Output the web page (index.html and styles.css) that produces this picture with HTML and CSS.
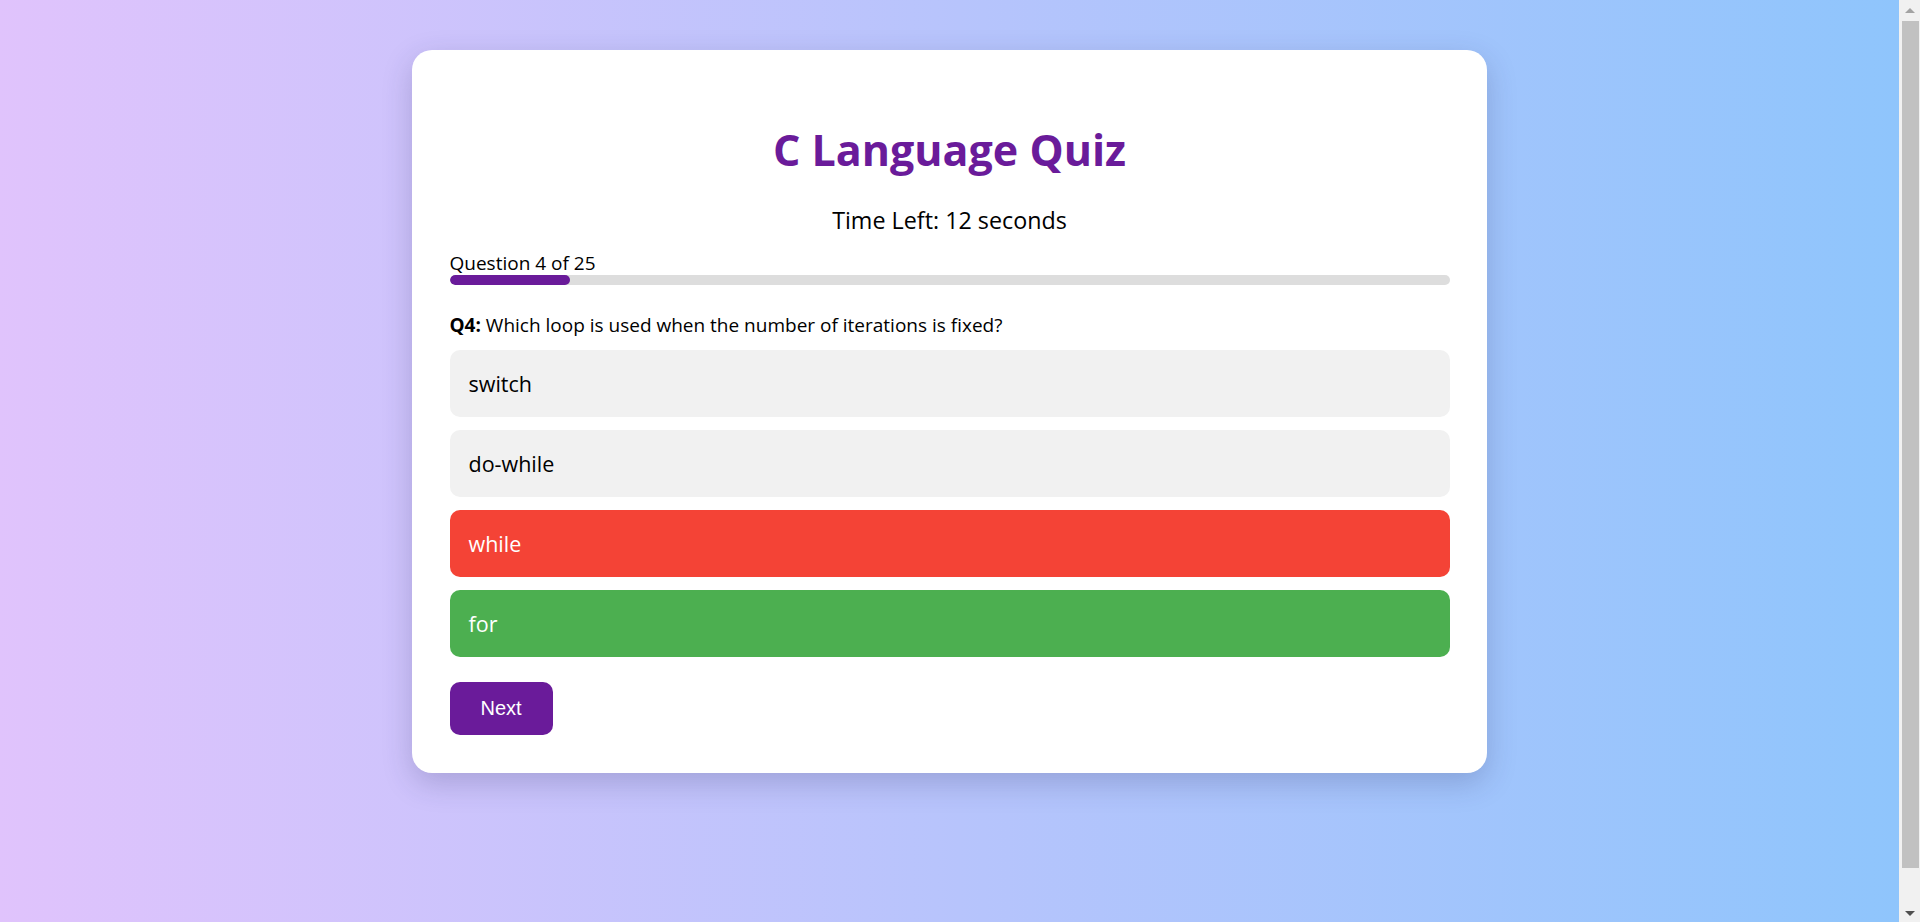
FILE: index.html
```html
<!DOCTYPE html>
<html lang="en">
<head>
<meta charset="UTF-8">
<title>C Language Quiz</title>
<link rel="stylesheet" href="styles.css">
</head>
<body>
  <main class="quiz-card">
    <h1 class="quiz-title">C Language Quiz</h1>
    <div class="timer">Time Left: 12 seconds</div>
    <div class="progress-label">Question 4 of 25</div>
    <div class="progress-track"><div class="progress-fill" style="width: 12%"></div></div>
    <p class="question"><strong>Q4:</strong> Which loop is used when the number of iterations is fixed?</p>
    <div class="options">
      <div class="option">switch</div>
      <div class="option">do-while</div>
      <div class="option option-wrong">while</div>
      <div class="option option-correct">for</div>
    </div>
    <button class="next-btn">Next</button>
  </main>
  <div class="scrollbar" aria-hidden="true">
    <span class="scroll-arrow scroll-arrow-up"></span>
    <span class="scroll-thumb"></span>
    <span class="scroll-arrow scroll-arrow-down"></span>
  </div>
</body>
</html>
```

FILE: styles.css
```css
html {
  background: linear-gradient(90deg, #e0c3fc 0%, #8ec5fc 100%);
}

body {
  margin: 0;
  padding: 22px 21px 22px 0;
  min-height: 100vh;
  font-family: "Open Sans", "Noto Sans", sans-serif;
  color: #000;
}

.quiz-card {
  width: 1000px;
  margin: 28px auto 0;
  padding: 38px 37.5px 38px;
  background: #fff;
  border-radius: 20px;
  box-shadow: 0 10px 30px rgba(40, 40, 90, 0.22);
}

.quiz-title {
  margin: 34px 0 0;
  font-size: 43px;
  line-height: 56px;
  font-weight: 700;
  color: #6a1b9a;
  text-align: center;
}

.timer {
  margin-top: 27px;
  font-size: 23.3px;
  line-height: 30px;
  text-align: center;
}

.progress-label {
  margin-top: 16px;
  font-size: 19px;
  line-height: 24px;
}

.progress-track {
  height: 10px;
  background: #ddd;
  border-radius: 5px;
  overflow: hidden;
}

.progress-fill {
  height: 100%;
  background: #6a1b9a;
  border-radius: 5px;
}

.question {
  margin: 27px 0 0;
  font-size: 19px;
  line-height: 26px;
}

.options {
  margin-top: 12px;
  display: flex;
  flex-direction: column;
  gap: 13px;
}

.option {
  padding: 20px 19px;
  font-size: 21.5px;
  line-height: 27px;
  background: #f1f1f1;
  border-radius: 10px;
}

.option-wrong {
  background: #f44336;
  color: #fff;
}

.option-correct {
  background: #4caf50;
  color: #fff;
}

.next-btn {
  margin-top: 25px;
  padding: 15px 31px;
  font-family: "Liberation Sans", Arial, sans-serif;
  font-size: 20px;
  line-height: 23px;
  color: #fff;
  background: #6a1b9a;
  border: none;
  border-radius: 10px;
}

/* replica of the window scrollbar shown in the screenshot */
.scrollbar {
  position: fixed;
  top: 0;
  right: 0;
  width: 21px;
  height: 100vh;
  background: #f1f1f1;
  display: flex;
  flex-direction: column;
  align-items: center;
}

.scroll-arrow {
  flex: 0 0 17px;
  width: 0;
  height: 0;
}

.scroll-arrow-up {
  margin-top: 8px;
  flex: none;
  border-left: 5px solid transparent;
  border-right: 5px solid transparent;
  border-bottom: 5px solid #a3a3a3;
}

.scroll-thumb {
  margin: 8px 0 0 1px;
  width: 17px;
  height: 847px;
  background: #c1c1c1;
}

.scroll-arrow-down {
  margin-top: auto;
  margin-bottom: 6px;
  flex: none;
  border-left: 5px solid transparent;
  border-right: 5px solid transparent;
  border-top: 5px solid #505050;
}
```
